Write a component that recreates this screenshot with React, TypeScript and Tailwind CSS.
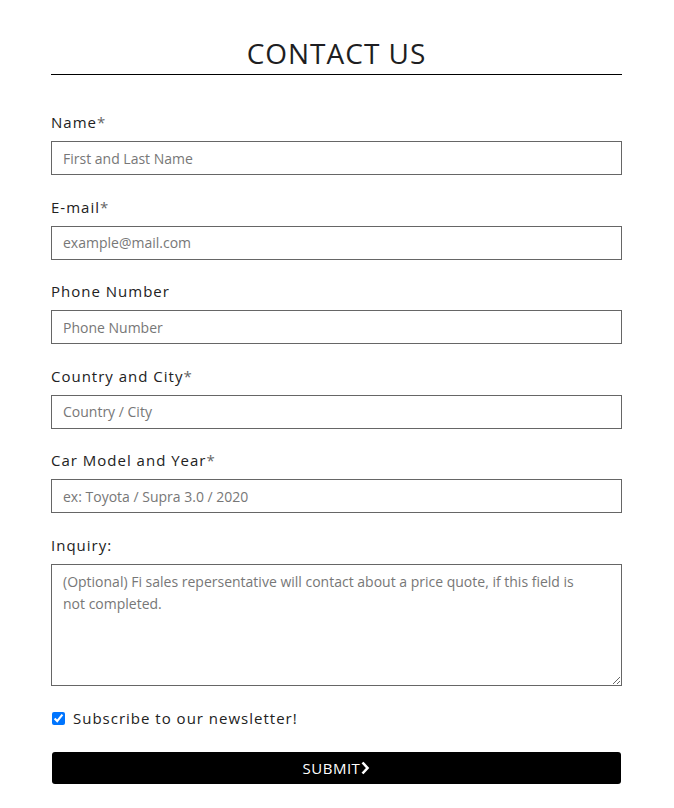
import React from "react";

const font = { fontFamily: '"Open Sans", "Noto Sans", sans-serif' };

function Field({ label, req, placeholder }: { label: string; req?: boolean; placeholder: string }) {
  return (
    <div className="flex flex-col mb-[21.5px]">
      <label className="block h-[20px] text-[15px] leading-[20px] tracking-[1px] text-[#222] mb-[9px]">
        {label}
        {req && <span className="text-[#666]">*</span>}
      </label>
      <input
        className="h-[34px] shrink-0 border border-[#666] px-[11px] text-[14px] text-[#333] placeholder:text-[#777] outline-none"
        placeholder={placeholder}
      />
    </div>
  );
}

export default function App() {
  return (
    <div className="bg-white min-h-[808px] w-[674px]" style={font}>
      <div className="mx-[51px] w-[571px] flex flex-col">
        <h1 className="mt-[34px] h-[38px] text-center text-[28px] leading-[38px] tracking-[1px] text-[#1e1e22] font-normal">
          CONTACT US
        </h1>
        <div className="mt-[2px] h-px bg-black mb-[37px]" />
        <Field label="Name" req placeholder="First and Last Name" />
        <Field label="E-mail" req placeholder="example@mail.com" />
        <Field label="Phone Number" placeholder="Phone Number" />
        <Field label="Country and City" req placeholder="Country / City" />
        <Field label="Car Model and Year" req placeholder="ex: Toyota / Supra 3.0 / 2020" />
        <div className="flex flex-col">
          <label className="block h-[20px] text-[15px] leading-[20px] tracking-[1px] text-[#222] mb-[9px]">Inquiry:</label>
          <textarea
            className="h-[122px] shrink-0 border border-[#666] pl-[11px] pr-[28px] py-[6px] text-[14px] leading-[22px] placeholder:text-[#777] outline-none"
            placeholder="(Optional) Fi sales repersentative will contact about a price quote, if this field is not completed."
          />
        </div>
        <label className="mt-[23px] flex items-center h-[20px]">
          <input type="checkbox" defaultChecked className="w-[13px] h-[13px] m-0 ml-px mr-[8px]" />
          <span className="text-[15px] tracking-[1px] text-[#222]">Subscribe to our newsletter!</span>
        </label>
        <button className="mt-[23.5px] ml-px w-[569px] h-[32px] bg-black rounded-[3px] text-white text-[15px] flex items-center justify-center tracking-[0.5px]">
          SUBMIT
          <svg width="9" height="14" viewBox="0 0 9 14" className="ml-[1px]">
            <path d="M1.5 1.5 L6.5 7 L1.5 12.5" stroke="white" strokeWidth="2.6" fill="none" />
          </svg>
        </button>
      </div>
    </div>
  );
}
